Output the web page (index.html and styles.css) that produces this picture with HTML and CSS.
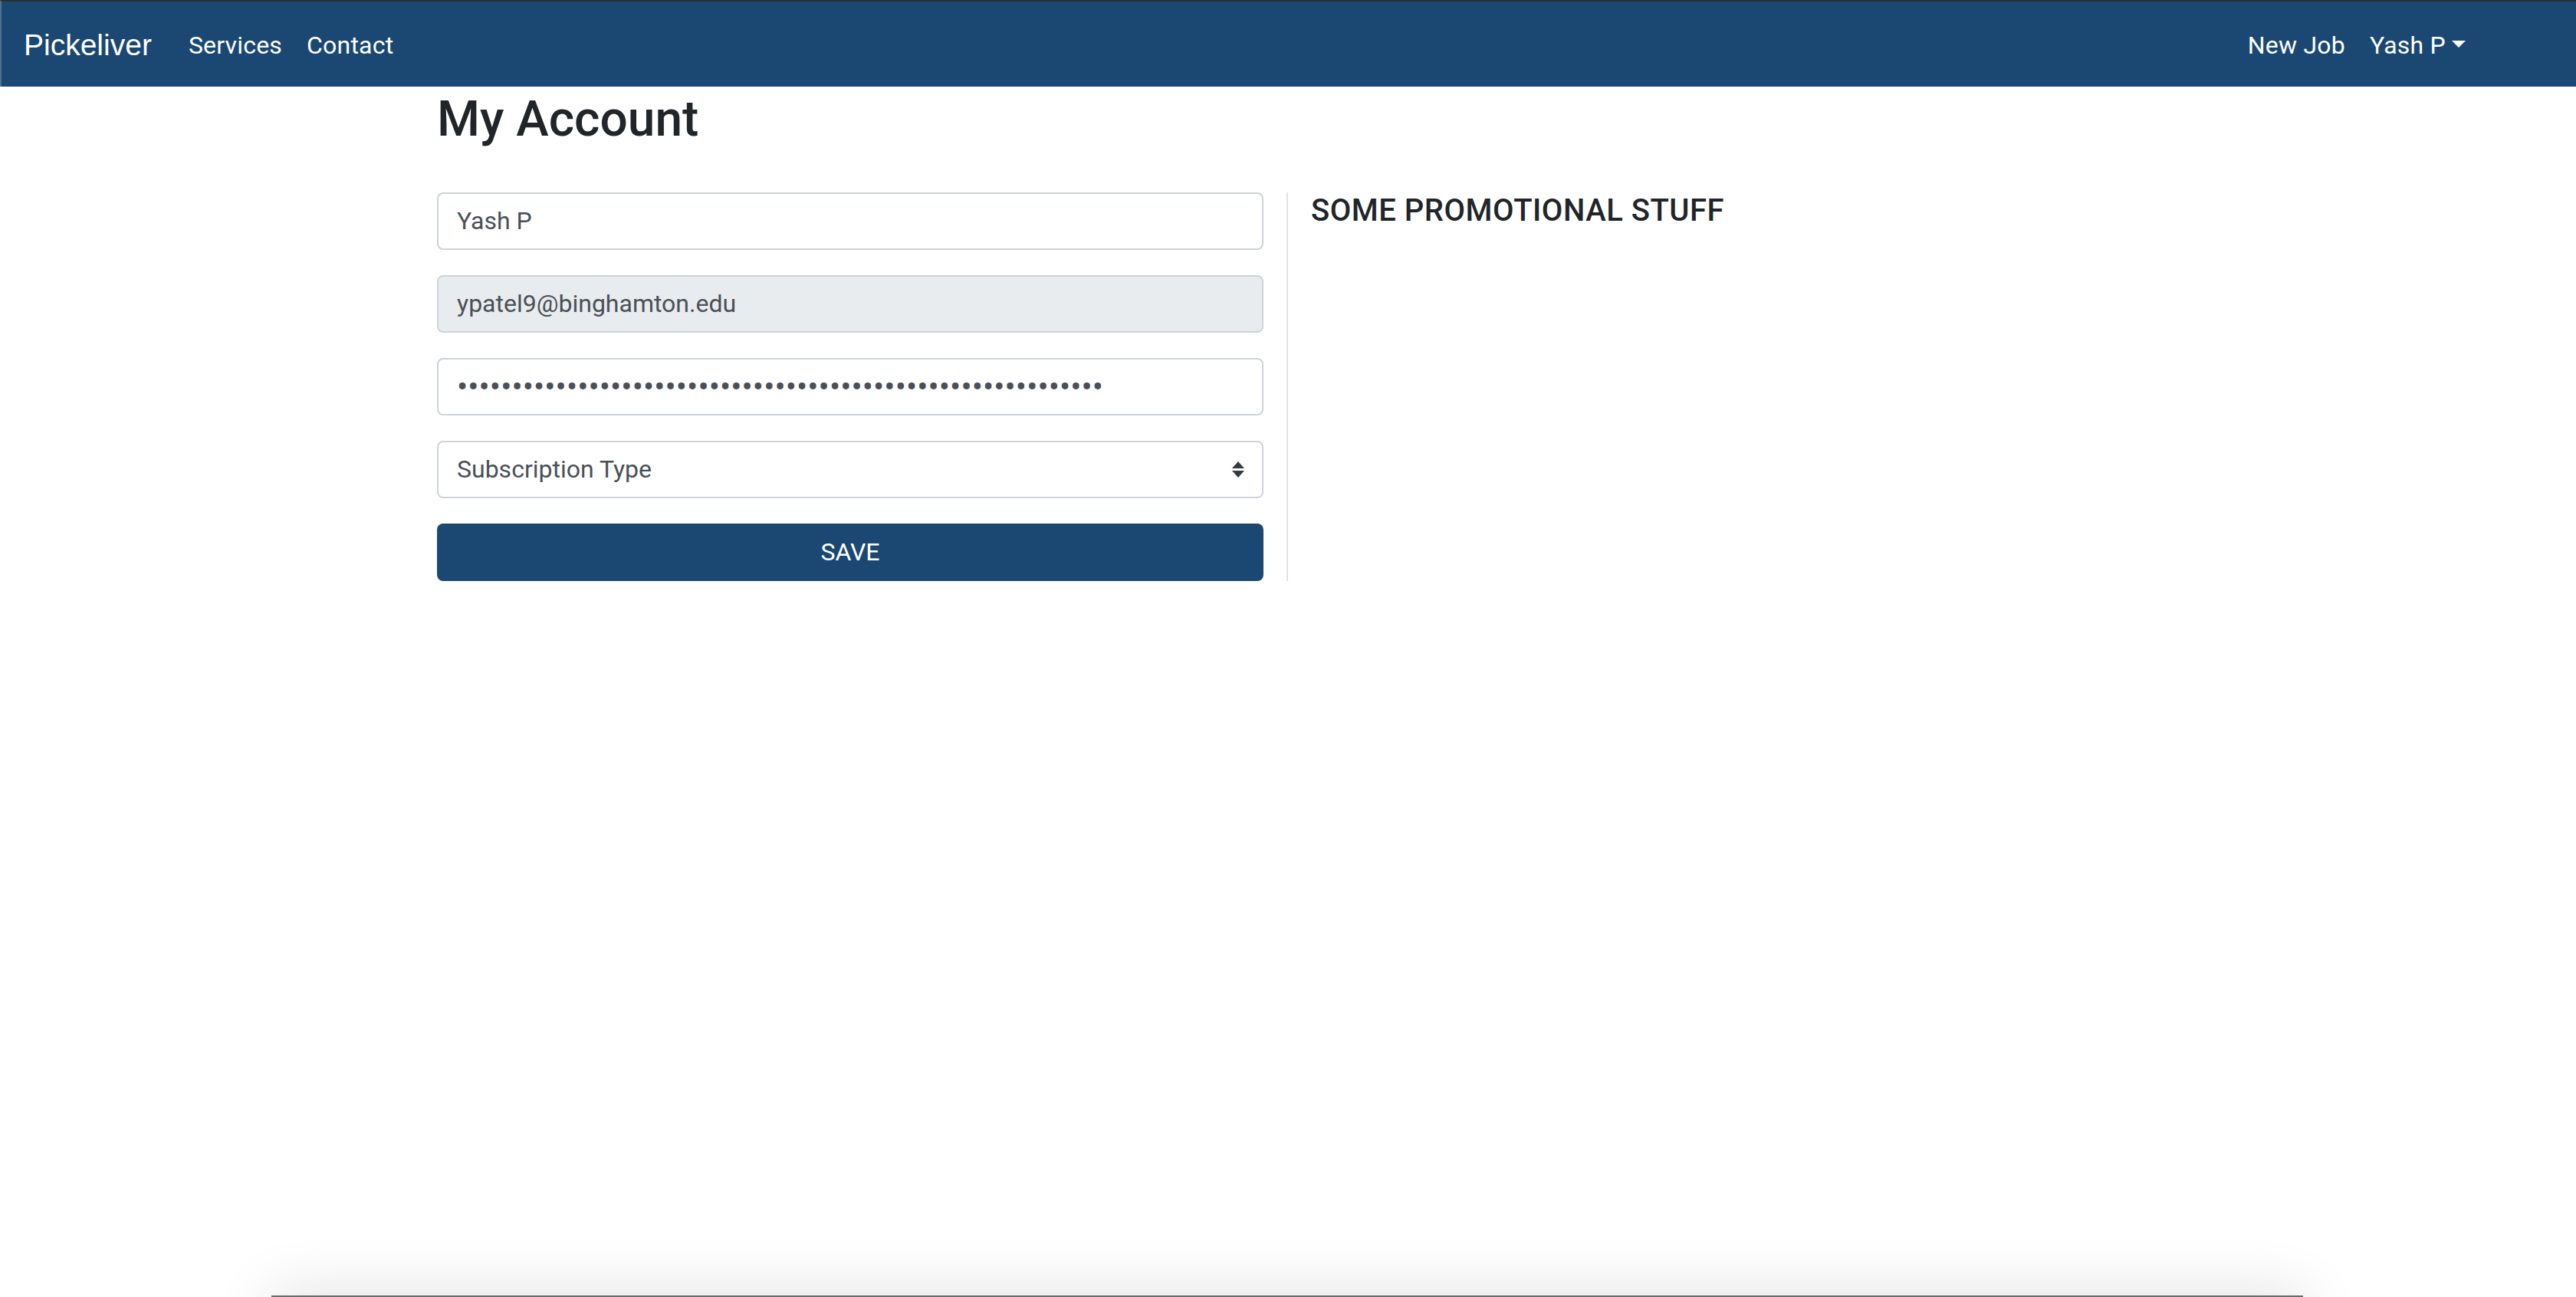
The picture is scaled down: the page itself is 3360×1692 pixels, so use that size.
FILE: index.html
```html
<!DOCTYPE html>
<html lang="en">
<head>
<meta charset="utf-8">
<title>My Account - Pickeliver</title>
<link rel="stylesheet" href="styles.css">
</head>
<body>
<nav class="navbar">
  <a class="brand" href="#">Pickeliver</a>
  <ul class="nav">
    <li><a class="nav-link" href="#">Services</a></li>
    <li><a class="nav-link" href="#">Contact</a></li>
  </ul>
  <ul class="nav nav-right">
    <li><a class="nav-link" href="#">New Job</a></li>
    <li><a class="nav-link dropdown-toggle" href="#">Yash P<span class="caret"></span></a></li>
  </ul>
</nav>
<main class="container">
  <h2 class="title">My Account</h2>
  <div class="row">
    <div class="col col-form">
      <form class="account-form">
        <input class="field" type="text" value="Yash P">
        <input class="field field-readonly" type="email" value="ypatel9@binghamton.edu" readonly>
        <input class="field field-password" type="password" value="abcdefghijabcdefghijabcdefghijabcdefghijabcdefghijabcdefghi">
        <div class="select-wrap">
          <select class="field field-select">
            <option>Subscription Type</option>
          </select>
          <svg class="select-arrows" width="16" height="21" viewBox="0 0 16 21" aria-hidden="true">
            <path d="M8 0 L16 9 H0 Z" fill="#343a40"/>
            <path d="M0 12 H16 L8 21 Z" fill="#343a40"/>
          </svg>
        </div>
        <button class="btn-save" type="button">SAVE</button>
      </form>
    </div>
    <div class="col col-promo">
      <h5 class="promo">SOME PROMOTIONAL STUFF</h5>
    </div>
  </div>
</main>
<div class="bottom-sheet"></div>
</body>
</html>
```

FILE: styles.css
```css
* { box-sizing: border-box; }

html, body {
  margin: 0;
  padding: 0;
  background: #ffffff;
  overflow: hidden;
}

body {
  font-family: Roboto, "Liberation Sans", Arial, sans-serif;
  color: #212529;
}

/* ---------- navbar ---------- */
.navbar {
  display: flex;
  align-items: center;
  height: 113px;
  padding: 3px 128px 0 29px;
  background: #1a4872;
  border-top: 2px solid #2c2d30;
  border-left: 2px solid #52708f;
}

.brand {
  font-family: "Liberation Sans", Arial, sans-serif;
  font-size: 39px;
  color: #ffffff;
  text-decoration: none;
  margin-right: 32px;
  white-space: nowrap;
}

.nav {
  display: flex;
  list-style: none;
  margin: 0;
  padding: 0;
}

.nav-right {
  margin-left: auto;
}

.nav-link {
  display: block;
  padding: 0 16px;
  font-size: 32px;
  letter-spacing: 0.2px;
  color: #ffffff;
  text-decoration: none;
  white-space: nowrap;
}

.caret {
  display: inline-block;
  margin-left: 0.255em;
  vertical-align: 0.255em;
  border-top: 0.3em solid #ffffff;
  border-right: 0.3em solid transparent;
  border-left: 0.3em solid transparent;
  border-bottom: 0;
}

/* ---------- content ---------- */
.container {
  width: 2280px;
  margin: 0 auto;
  padding: 0 30px;
}

.title {
  margin: 5px 0 0;
  font-size: 64px;
  font-weight: 500;
  line-height: 1.2;
  color: #212529;
}

.row {
  display: grid;
  grid-template-columns: 1140px 1140px;
  margin: 56px -30px 0;
}

.col {
  padding: 0 30px;
}

.col-form {
  border-right: 2px solid #dee2e6;
}

.account-form {
  display: flex;
  flex-direction: column;
  gap: 33px;
}

.field {
  display: block;
  width: 100%;
  height: 75px;
  margin: 0;
  padding: 0 24px;
  font-family: Roboto, "Liberation Sans", Arial, sans-serif;
  font-size: 32px;
  color: #495057;
  background: #ffffff;
  border: 2px solid #ced4da;
  border-radius: 8px;
  outline: none;
}

.field-readonly {
  background: #e9ecef;
}

.field-password {
  font-size: 42px;
  letter-spacing: 0.12px;
}

.select-wrap {
  position: relative;
}

.field-select {
  appearance: none;
  -webkit-appearance: none;
}

.select-arrows {
  position: absolute;
  right: 25px;
  top: 27px;
  pointer-events: none;
}

.btn-save {
  display: block;
  width: 100%;
  height: 75px;
  margin: 0;
  padding: 0;
  font-family: Roboto, "Liberation Sans", Arial, sans-serif;
  font-size: 32px;
  color: #ffffff;
  background: #1a4872;
  border: 0;
  border-radius: 8px;
}

.promo {
  margin: 0;
  font-size: 40px;
  font-weight: 500;
  line-height: 1.2;
  letter-spacing: 0.5px;
  color: #212529;
}

/* ---------- sheet peeking at the bottom ---------- */
.bottom-sheet {
  position: fixed;
  left: 354px;
  right: 356px;
  bottom: -58px;
  height: 60px;
  background: #ffffff;
  border-top: 2px solid #6a6a6a;
  box-shadow: 0 0 80px rgba(0, 0, 0, 0.14);
}
```
